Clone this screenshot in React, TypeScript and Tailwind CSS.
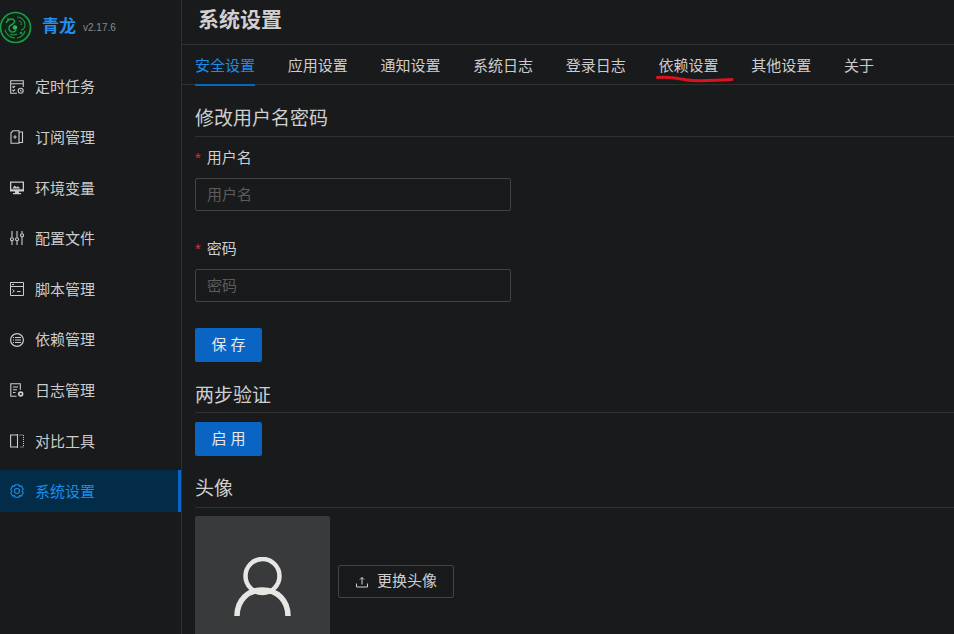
const FONT = "font-['Liberation_Sans','Noto_Sans_CJK_SC',sans-serif]"

const IconTask = () => (
  <svg viewBox="0 0 14 14" className="w-[14px] h-[14px]" fill="none" stroke="currentColor" strokeWidth="1.100">
    <path d="M7 13.200H.7V.8h12.600V7" />
    <path d="M.7 3.800h12.600M2.500 6.500l1 1 1.500-1.500M2.500 10l1 1 1.500-1.500" />
    <circle cx="10.700" cy="10.700" r="2.500" />
    <path d="M10.700 9.700v1l.8.6" />
  </svg>
)

const IconSub = () => (
  <svg viewBox="0 0 14 14" className="w-[14px] h-[14px]" fill="none" stroke="currentColor" strokeWidth="1.100">
    <path d="M9 .8H3L1 2.800v10.400h8zM9 2h3.500v10.500H9" />
    <path d="M3.300 7h3.400M5 5.300v3.400" />
  </svg>
)

const IconEnv = () => (
  <svg viewBox="0 0 14 14" className="w-[14px] h-[14px]" fill="currentColor">
    <path fillRule="evenodd" d="M0 .5h14V10.500H9V12h2v1.200H3V12h2V10.500H0zM1.300 1.800v6.400h11.400V1.800z" />
    <path d="M2.500 7.500l2-3 2 1.800 1.200-1 2.800 2.200z" />
  </svg>
)

const IconConfig = () => (
  <svg viewBox="0 0 14 14" className="w-[14px] h-[14px]" fill="none" stroke="currentColor" strokeWidth="1.100">
    <path d="M2 0v6.500M2 10v4M7 0v6.500M7 10v4M12 0v2.500M12 6v8" />
    <circle cx="2" cy="8.300" r="1.500" />
    <circle cx="7" cy="8.300" r="1.500" />
    <circle cx="12" cy="4.300" r="1.500" />
  </svg>
)

const IconScript = () => (
  <svg viewBox="0 0 14 14" className="w-[14px] h-[14px]" fill="none" stroke="currentColor" strokeWidth="1">
    <path d="M.5 .5h13v13H.5zM.5 4.500h13" />
    <path d="M2 2.500h2M2.500 7.500l1.800 1.500-1.800 1.500M7 9.500h3.500" />
  </svg>
)

const IconDep = () => (
  <svg viewBox="0 0 14 14" className="w-[14px] h-[14px]" fill="none" stroke="currentColor" strokeWidth="1.200">
    <circle cx="7" cy="7" r="6.400" />
    <path d="M3 4.500h1M5 4.500h6M3 7h1M5 7h6M3 9.500h1M5 9.500h6" />
  </svg>
)

const IconLog = () => (
  <svg viewBox="0 0 14 14" className="w-[14px] h-[14px]" fill="none" stroke="currentColor" strokeWidth="1.100">
    <path d="M6.500 13.300H.8V.7h9.500v6" />
    <path d="M3 4h5M3 6.800h4M3 9.500h2.500" />
    <circle cx="10.700" cy="11" r="1.900" strokeWidth="1.700" />
  </svg>
)

const IconDiff = () => (
  <svg viewBox="0 0 14 14" className="w-[14px] h-[14px]" fill="none" stroke="currentColor" strokeWidth="1.100">
    <path d="M7.500 0v14M7.500 1H.6v12h6.900" />
    <path d="M9.500 1h4v12h-4" strokeDasharray="1 1" />
  </svg>
)

const IconGear = () => (
  <svg viewBox="0 0 14 14" className="w-[14px] h-[14px]" fill="none" stroke="currentColor" strokeWidth="1.100" strokeLinejoin="round">
    <path d="M5.200 .7h3.600l.6 1.700 1.900-.5 2 3.300L12 7l1.300 1.800-2 3.300-1.900-.5-.6 1.700H5.200l-.6-1.700-1.900.5-2-3.300L2 7 .7 5.200l2-3.300 1.900.5z" />
    <circle cx="7" cy="7" r="2.500" />
  </svg>
)

const MENU = [
  { label: '定时任务', icon: <IconTask /> },
  { label: '订阅管理', icon: <IconSub /> },
  { label: '环境变量', icon: <IconEnv /> },
  { label: '配置文件', icon: <IconConfig /> },
  { label: '脚本管理', icon: <IconScript /> },
  { label: '依赖管理', icon: <IconDep /> },
  { label: '日志管理', icon: <IconLog /> },
  { label: '对比工具', icon: <IconDiff /> },
  { label: '系统设置', icon: <IconGear />, active: true },
]

const TABS = ['安全设置', '应用设置', '通知设置', '系统日志', '登录日志', '依赖设置', '其他设置', '关于']

function Logo() {
  return (
    <svg viewBox="0 0 32 33" className="w-8 h-[33px] shrink-0" fill="none">
      <circle cx="15.500" cy="16.500" r="15" stroke="#1f9a48" strokeWidth="1.700" fill="#0e2417" />
      <path d="M6 12c2-4 6-5 8-3s-1 4-3 5-3 4-1 6 5 1 6-1" stroke="#22a04c" strokeWidth="1.400" />
      <path d="M17 6c4 0 8 3 8 8 0 3-2 5-4 5" stroke="#1e8f44" strokeWidth="1.200" />
      <path d="M19 10c2 0 3 2 2 4" stroke="#22a04c" strokeWidth="1" />
      <path d="M5 19c1 4 5 8 10 8M17 27c3 0 7-3 8-7M10 23c2 1 5 1 7 0" stroke="#1e8f44" strokeWidth="1.200" />
      <circle cx="15" cy="16.500" r="2.200" fill="#2fb85c" />
      <circle cx="21" cy="22" r="1.300" fill="#1e8f44" />
      <circle cx="8" cy="8" r="1" fill="#1e8f44" />
    </svg>
  )
}

function Sidebar() {
  return (
    <aside className="w-[182px] h-[634px] shrink-0 border-r border-[#303030] bg-[#191a1c]">
      <div className="flex items-center h-[40px] mt-[7px]">
        <Logo />
        <span className="ml-[10px] text-[17px] font-bold text-[#1f90f0]">青龙</span>
        <span className="ml-[7px] text-[10px] text-[#8a8a8a]">v2.17.6</span>
      </div>
      <nav className="mt-[18.600px] flex flex-col">
        {MENU.map((item) => (
          <div
            key={item.label}
            className={`flex items-center h-[42px] mb-[8.600px] pl-[10px] text-[15px] ${
              item.active
                ? 'bg-[#032c48] text-[#1c8de8] border-r-[3px] border-[#0a64c4]'
                : 'text-[#cccccc]'
            }`}
          >
            {item.icon}
            <span className="ml-[11px] pt-[2px]">{item.label}</span>
          </div>
        ))}
      </nav>
    </aside>
  )
}

function SectionTitle({ children, className }: { children: React.ReactNode; className: string }) {
  return (
    <h2 className={`border-b border-[#303030] text-[19px] leading-[30px] text-[#cfcfcf] ${className}`}>
      {children}
    </h2>
  )
}

function Field({ label }: { label: string }) {
  return (
    <div>
      <label className="block h-[32px] text-[15px] leading-[24px] text-[#cfcfcf]">
        <span className="text-[#d9303a] mr-[6px]">*</span>
        {label}
      </label>
      <input
        placeholder={label}
        readOnly
        className="block w-[316px] h-[33px] px-[11px] rounded-[2px] border border-[#434343] bg-transparent text-[15px] placeholder:text-[#5c5c5c] outline-none"
      />
    </div>
  )
}

function PrimaryButton({ children }: { children: React.ReactNode }) {
  return (
    <button className="block w-[67px] h-[34px] rounded-[2px] bg-[#0a64c4] text-[15px] text-[#e8e8e8]">
      {children}
    </button>
  )
}

export default function App() {
  return (
    <div className={`flex w-[954px] h-[634px] overflow-hidden bg-[#191a1c] ${FONT}`}>
      <Sidebar />
      <main className="flex-1 min-w-0">
        <div className="h-[45px] border-b border-[#303030] pl-[16px] text-[21px] font-bold leading-[40px] text-[#d0d0d0]">
          系统设置
        </div>
        <div className="h-[40px] border-b border-[#303030] pl-[13px] flex gap-[32.700px]">
          {TABS.map((tab, i) => (
            <div
              key={tab}
              className={`relative h-[40px] text-[15px] leading-[41px] ${i === 0 ? 'text-[#1c8de8]' : 'text-[#cccccc]'}`}
            >
              {tab}
              {i === 0 && <div className="absolute left-0 right-0 bottom-[-1px] h-[2px] bg-[#0a64c4]" />}
              {i === 5 && (
                <svg viewBox="0 0 78 8" className="absolute left-[-3px] top-[30px] w-[78px] h-[8px]" fill="none">
                  <path d="M1.500 2.500C12 1.500 22 3 30 4.800c10 1.700 25 1 46-.3" stroke="#d8141c" strokeWidth="3" strokeLinecap="round" />
                </svg>
              )}
            </div>
          ))}
        </div>
        <div className="pl-[13px] pt-[19px]">
          <SectionTitle className="h-[33px]">修改用户名密码</SectionTitle>
          <div className="mt-[9px] flex flex-col gap-[26px]">
            <Field label="用户名" />
            <Field label="密码" />
          </div>
          <div className="mt-[26px]">
            <PrimaryButton>保 存</PrimaryButton>
          </div>
          <div className="mt-[19px]">
            <SectionTitle className="h-[32px]">两步验证</SectionTitle>
          </div>
          <div className="mt-[9px]">
            <PrimaryButton>启 用</PrimaryButton>
          </div>
          <div className="mt-[18px]">
            <SectionTitle className="h-[34px]">头像</SectionTitle>
          </div>
          <div className="mt-[8px] flex items-start gap-[8px]">
            <div className="w-[135px] h-[135px] rounded-[2px] bg-[#383a3b] flex justify-center pt-[41px] shrink-0">
              <svg viewBox="0 0 58 59" className="w-[58px] h-[59px]" fill="none" stroke="#e8e6e3">
                <circle cx="28.500" cy="19" r="17" strokeWidth="4.500" />
                <path d="M3 59c0-16 11-26 25.500-26S54 43 54 59" strokeWidth="5.500" />
              </svg>
            </div>
            <button className="mt-[49px] flex items-center justify-center w-[116px] h-[33px] rounded-[2px] border border-[#434343] text-[15px] text-[#cfcfcf]">
              <svg viewBox="0 0 14 14" className="w-[14px] h-[14px] mr-[8px]" fill="none" stroke="currentColor" strokeWidth="1">
                <path d="M7 9.500V2.500M5 4.500l2-2 2 2M1.500 8.500v3.500h11V8.500" />
              </svg>
              更换头像
            </button>
          </div>
        </div>
      </main>
    </div>
  )
}
